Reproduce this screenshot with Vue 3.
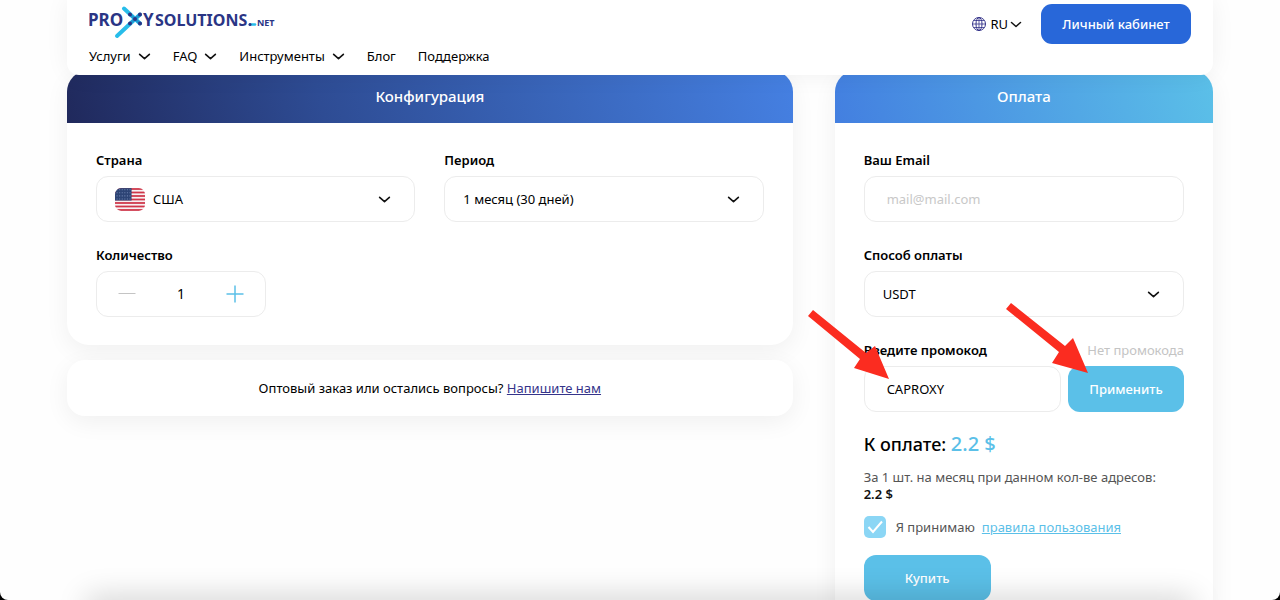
<script setup>
import { ref } from 'vue'

const nav = [
  { label: 'Услуги', menu: true },
  { label: 'FAQ', menu: true },
  { label: 'Инструменты', menu: true },
  { label: 'Блог', menu: false },
  { label: 'Поддержка', menu: false },
]
const stripes = [0, 1, 2, 3, 4, 5, 6]
const stars = [0, 1, 2, 3]

const country = ref('us')
const period = ref('1')
const quantity = ref(1)
const email = ref('')
const method = ref('usdt')
const promo = ref('CAPROXY')
const accepted = ref(true)
</script>

<template>
  <div class="window">
    <div class="page">
      <header class="header">
        <div class="top">
          <a class="logo" href="#" aria-label="ProxySolutions.net">
            <svg width="188" height="36" viewBox="0 0 188 36">
              <g stroke-linecap="round" fill="none" stroke-width="4">
                <path d="M35 2.500L51 17.500" stroke="#27bdea" />
                <path d="M28 30L51 8.500" stroke="#27bdea" />
                <path d="M41 8.500L51 17.500M41 17.500L51 8.500" stroke="#1f9ad2" stroke-width="3" />
              </g>
              <g fill="#2a3585">
                <circle cx="41" cy="8.500" r="2" /><circle cx="51" cy="8.500" r="2" />
                <circle cx="41" cy="17.500" r="2" /><circle cx="51" cy="17.500" r="2" />
                <circle cx="46" cy="13" r="2" />
                <text x="-1" y="20" font-size="17">PRO</text>
                <text x="54" y="20" font-size="17">Y</text>
                <text x="66" y="20" font-size="16">SOLUTIONS</text>
                <text x="168" y="20" font-size="9">NET</text>
              </g>
              <path d="M161 18.500H166" stroke="#27bdea" stroke-width="2.500" stroke-linecap="round" />
              <circle cx="161" cy="18.500" r="1.500" fill="#2a3585" />
            </svg>
          </a>
          <div class="tools">
            <button class="lang" type="button">
              <svg width="14" height="14" viewBox="0 0 14 14" fill="none" stroke="#35348a">
                <circle cx="7" cy="7" r="6.500" />
                <ellipse cx="7" cy="7" rx="3" ry="6.500" />
                <path d="M7 .5V13.500M.5 7H13.500M2 3.500H12M2 10.500H12" stroke-width=".8" />
              </svg>
              <span>RU</span>
              <svg class="chev" viewBox="0 0 12 12"><path d="M1.500 4L6 8L10.500 4" /></svg>
            </button>
            <button class="account" type="button">Личный кабинет</button>
          </div>
        </div>
        <nav class="nav">
          <a v-for="n in nav" :key="n.label" href="#">
            {{ n.label }}
            <svg v-if="n.menu" class="chev" viewBox="0 0 12 12"><path d="M1.500 4L6 8L10.500 4" /></svg>
          </a>
        </nav>
      </header>

      <main class="main">
        <div class="left">
          <section class="card">
            <h2 class="title dark">Конфигурация</h2>
            <div class="body config">
              <div class="field">
                <label for="country">Страна</label>
                <div class="select flagged">
                  <select id="country" v-model="country"><option value="us">США</option></select>
                  <svg class="flag" viewBox="0 0 29 22">
                    <clipPath id="flag-shape"><rect width="29" height="22" rx="6" /></clipPath>
                    <g clip-path="url(#flag-shape)">
                      <rect width="29" height="22" fill="#f7f0f2" />
                      <rect v-for="s in stripes" :key="s" y="0" width="29" height="1.700" fill="#cf3649" :transform="`translate(0 ${s * 3.38})`" />
                      <rect width="16" height="12" fill="#2d4475" />
                      <path v-for="s in stars" :key="'r' + s" :d="`M1.500 ${s * 3 + 1.5}H15`" stroke="#6f83b0" stroke-dasharray="1 1.500" />
                    </g>
                  </svg>
                  <svg class="chev" viewBox="0 0 12 12"><path d="M1.500 4L6 8L10.500 4" /></svg>
                </div>
              </div>
              <div class="field">
                <label for="period">Период</label>
                <div class="select">
                  <select id="period" v-model="period"><option value="1">1 месяц (30 дней)</option></select>
                  <svg class="chev" viewBox="0 0 12 12"><path d="M1.500 4L6 8L10.500 4" /></svg>
                </div>
              </div>
              <div class="field">
                <label for="quantity">Количество</label>
                <div class="stepper">
                  <button type="button" aria-label="Меньше" @click="quantity = Math.max(1, quantity - 1)">
                    <svg width="18" height="18" viewBox="0 0 18 18"><path d="M.5 8.500H17.500" stroke="#c4c4c4" /></svg>
                  </button>
                  <input id="quantity" v-model="quantity" type="text" inputmode="numeric">
                  <button type="button" aria-label="Больше" @click="quantity++">
                    <svg width="18" height="18" viewBox="0 0 18 18"><path d="M.5 9H17.500M9 .5V17.500" stroke="#5bc0e8" stroke-width="1.500" /></svg>
                  </button>
                </div>
              </div>
            </div>
          </section>
          <section class="card ask">
            <p>Оптовый заказ или остались вопросы? <a href="#">Напишите нам</a></p>
          </section>
        </div>

        <section class="card">
          <h2 class="title light">Оплата</h2>
          <form class="body pay" @submit.prevent>
            <div class="field">
              <label for="email">Ваш Email</label>
              <input id="email" v-model="email" class="box" type="email" placeholder="mail@mail.com">
            </div>
            <div class="field">
              <label for="method">Способ оплаты</label>
              <div class="select">
                <select id="method" v-model="method"><option value="usdt">USDT</option></select>
                <svg class="chev" viewBox="0 0 12 12"><path d="M1.500 4L6 8L10.500 4" /></svg>
              </div>
            </div>
            <div class="field">
              <div class="labels">
                <label for="promo">Введите промокод</label>
                <span>Нет промокода</span>
              </div>
              <div class="promo">
                <input id="promo" v-model="promo" class="box" type="text">
                <button class="action" type="button">Применить</button>
                <svg class="arrow first" width="86" height="72" viewBox="0 0 86 72"><path d="M5 0L0 6L52 49L46 58L81 69L67 36L58 43Z" /></svg>
                <svg class="arrow second" width="86" height="72" viewBox="0 0 86 72"><path d="M5 0L0 6L53 49L46 60L82 70L67 35L59 43Z" /></svg>
              </div>
            </div>
            <p class="total">К оплате: <strong>2.2 $</strong></p>
            <p class="unit">За 1 шт. на месяц при данном кол-ве адресов:<br><b>2.2 $</b></p>
            <div class="terms">
              <span class="check">
                <input id="terms" v-model="accepted" type="checkbox">
                <svg v-if="accepted" viewBox="0 0 22 22"><path d="M4.500 11L9 16L18 5.500" /></svg>
              </span>
              <label for="terms">Я принимаю</label>
              <a href="#">правила пользования</a>
            </div>
            <button class="action buy" type="submit">Купить</button>
          </form>
        </section>
      </main>
    </div>
    <div class="shade"></div>
  </div>
</template>

<style>
body {
  background: #000;
  overflow: hidden;
}
</style>

<style scoped>
* {
  box-sizing: border-box;
}
.window {
  position: relative;
  height: 100vh;
  overflow: hidden;
  background: #fefefe;
  border-radius: 0 0 8px 8px;
  font: 400 13px/18px "Noto Sans", "Open Sans", sans-serif;
  color: #000;
}
button, input, select {
  font: inherit;
  color: inherit;
  margin: 0;
}
button {
  border: 0;
  padding: 0;
  background: none;
  cursor: pointer;
}
p, h2 {
  margin: 0;
}
.page {
  max-width: 1440px;
  margin: 0 auto;
  padding: 0 67px;
}
.header {
  position: relative;
  z-index: 2;
  padding: 4px 22px 10px;
  background: #fff;
  border-radius: 0 0 12px 12px;
  box-shadow: 0 0 24px rgba(0, 0, 0, 0.06);
}
.top {
  display: flex;
  align-items: center;
  justify-content: space-between;
}
.logo {
  height: 36px;
  font-weight: 700;
}
.logo svg {
  display: block;
}
.tools, .lang {
  display: flex;
  align-items: center;
}
.tools {
  gap: 19px;
}
.lang {
  gap: 4px;
}
.lang .chev {
  width: 12px;
  margin-left: -2px;
}
.account {
  height: 40px;
  padding: 0 20px;
  min-width: 150px;
  border-radius: 11px;
  background: #2867d9;
  color: #fff;
  font-weight: 500;
}
.nav {
  display: flex;
  gap: 22px;
  margin-top: 3px;
}
.nav a {
  display: flex;
  align-items: center;
  gap: 7px;
  color: inherit;
  text-decoration: none;
}
.chev {
  width: 13px;
  height: 13px;
  fill: none;
  stroke: #111;
  stroke-width: 1.5;
  stroke-linecap: round;
  stroke-linejoin: round;
}
.main {
  display: grid;
  grid-template-columns: 725fr 378fr;
  gap: 42px;
  align-items: start;
  margin-top: -5px;
}
.left {
  display: grid;
  gap: 15px;
}
.card {
  border-radius: 22px;
  background: #fff;
  box-shadow: 0 6px 24px rgba(0, 0, 0, 0.06);
}
.title {
  padding: 16px 0 17px;
  border-radius: 22px 22px 0 0;
  font-size: 15px;
  line-height: 20px;
  font-weight: 500;
  text-align: center;
  color: #fff;
}
.dark {
  background: linear-gradient(75deg, #20295c, #2e4c94 35%, #4580e2);
}
.light {
  background: linear-gradient(75deg, #437fe0, #5bc0e8);
}
.body {
  padding: 28px 29px;
}
.config {
  display: grid;
  grid-template-columns: 1fr 1fr;
  gap: 24px 29px;
}
.field > label, .labels {
  display: block;
  margin-bottom: 7px;
}
.field label {
  font-weight: 600;
}
.select {
  position: relative;
}
.select select, .box, .stepper {
  display: block;
  width: 100%;
  height: 46px;
  border: 1px solid #ececec;
  border-radius: 12px;
  background: #fff;
  outline: 0;
}
.select select {
  appearance: none;
  padding: 0 48px 0 18px;
}
.select.flagged select {
  padding-left: 56px;
}
.select svg {
  position: absolute;
  top: 0;
  bottom: 0;
  margin: auto 0;
  pointer-events: none;
}
.select .chev {
  right: 24px;
}
.flag {
  left: 19px;
  width: 30px;
  height: 23px;
}
.stepper {
  display: flex;
  align-items: center;
  justify-content: space-between;
  width: 170px;
  padding: 0 21px;
}
.stepper button, .stepper svg {
  display: block;
}
.stepper input {
  width: 40px;
  border: 0;
  padding: 0;
  outline: 0;
  text-align: center;
  font-size: 14px;
}
.ask {
  padding: 19px 18px;
  border-radius: 18px;
  text-align: center;
}
.ask a {
  color: #35348a;
}
.pay .field {
  margin-bottom: 24px;
}
.box {
  min-width: 0;
  padding: 0 22px;
}
.box::placeholder {
  color: #c8c8c8;
  opacity: 1;
}
.labels {
  display: flex;
  justify-content: space-between;
}
.labels span {
  color: #c4c4c4;
}
.promo {
  position: relative;
  display: flex;
  gap: 7px;
}
.action {
  flex: none;
  width: 116px;
  height: 46px;
  border-radius: 12px;
  background: #5bc0e8;
  color: #fff;
  font-weight: 500;
}
.arrow {
  position: absolute;
  fill: #fb2c20;
  pointer-events: none;
}
.first {
  left: -56px;
  top: -56px;
}
.second {
  right: 92px;
  top: -63px;
}
.pay .total {
  margin-top: -5px;
  font-size: 18px;
  line-height: 26px;
  font-weight: 500;
}
.total strong {
  font-size: 20px;
  font-weight: 500;
  color: #5bc0e8;
}
.unit {
  margin-top: 12px;
  line-height: 17px;
  color: #555;
}
.unit b {
  font-weight: 600;
  color: #111;
}
.terms {
  display: flex;
  align-items: center;
  margin-top: 13px;
  color: #555;
}
.check {
  position: relative;
  width: 22px;
  height: 22px;
  margin-right: 10px;
}
.check input {
  display: block;
  appearance: none;
  width: 22px;
  height: 22px;
  border-radius: 5px;
  background: #8bd6f5;
}
.check svg {
  position: absolute;
  inset: 0;
  fill: none;
  stroke: #fff;
  stroke-width: 2;
  pointer-events: none;
}
.terms a {
  margin-left: 7px;
  color: #5bc0e8;
}
.buy {
  display: block;
  width: 127px;
  margin-top: 17px;
}
.shade {
  position: absolute;
  z-index: 3;
  left: 90px;
  right: 90px;
  bottom: -20px;
  height: 20px;
  box-shadow: 0 0 30px 3px rgba(0, 0, 0, 0.18);
  pointer-events: none;
}
</style>
